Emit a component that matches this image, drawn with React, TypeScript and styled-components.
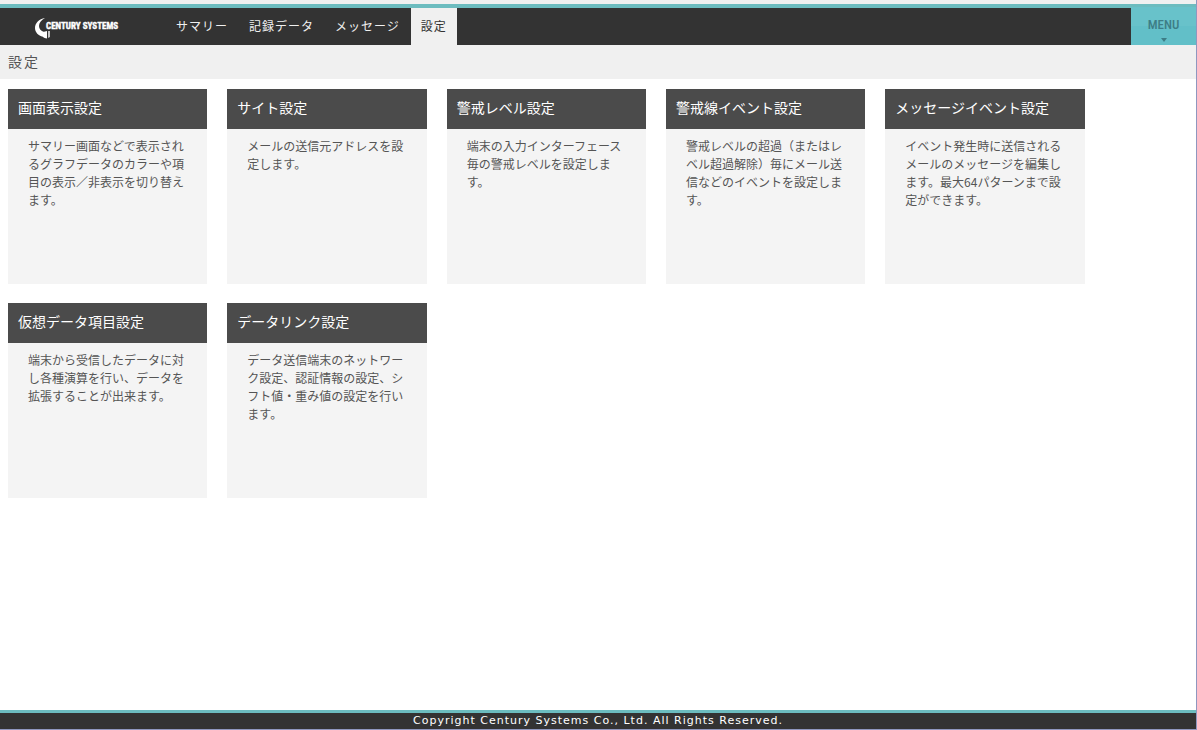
import React from "react";
import styled, { createGlobalStyle, css } from "styled-components";

const colors = {
  teal: "#6cbcbf",
  menu: "#62bfc8",
  dark: "#333333",
  panel: "#f0f0f0",
  cardHead: "#4b4b4b",
  cardBody: "#f4f4f4",
  text: "#555555",
  edge: "#8f97bf",
};

const GlobalStyle = createGlobalStyle`
  *, *::before, *::after { box-sizing: border-box; }
  body {
    margin: 0;
    background: #ffffff;
    color: ${colors.text};
    font-family: "Noto Sans CJK JP", sans-serif;
    font-size: 12px;
    line-height: 18px;
  }
`;

const Page = styled.div`
  display: flex;
  flex-direction: column;
  min-height: 100vh;
  border-right: 1px solid ${colors.edge};
  border-bottom: 1px solid ${colors.edge};
`;

const Header = styled.header`
  padding-top: 4px;
  background: ${colors.panel};
`;

const NavBar = styled.div`
  display: flex;
  align-items: stretch;
  height: 41px;
  border-top: 4px solid ${colors.teal};
  background: ${colors.dark};
`;

const LogoLink = styled.a`
  display: flex;
  align-items: center;
  width: 166px;
  padding-left: 33px;
`;

const Nav = styled.nav`
  display: flex;
  flex: 1;
  gap: 1px;
`;

const NavLink = styled.a<{ $active?: boolean }>`
  display: flex;
  align-items: center;
  padding: 0 10px 2px;
  color: #f0f0f0;
  letter-spacing: 1px;
  text-decoration: none;
  white-space: nowrap;
  ${(p) =>
    p.$active &&
    css`
      background: ${colors.panel};
      color: ${colors.dark};
    `}
`;

const MenuButton = styled.button`
  display: flex;
  flex-direction: column;
  align-items: center;
  justify-content: flex-end;
  gap: 5px;
  width: 65px;
  margin-top: -4px;
  padding: 0 0 3px;
  border: 0;
  border-top: 3px solid ${colors.teal};
  background: linear-gradient(#68c2ca 50%, ${colors.menu} 50%);
  color: #3d7d86;
  font: 500 13px/16px "Roboto Condensed", Roboto, sans-serif;
`;

const PageTitle = styled.h1`
  margin: 0;
  padding: 7px 8px 9px;
  background: ${colors.panel};
  font-size: 14px;
  font-weight: 400;
  line-height: 18px;
  letter-spacing: 2px;
`;

const Main = styled.main`
  flex: 1;
  padding: 10px 0 20px 8px;
`;

const CardGrid = styled.div`
  display: grid;
  grid-template-columns: repeat(auto-fill, calc((100% + 8px) / 6));
  grid-auto-rows: minmax(195px, auto);
  gap: 19px 20px;
`;

const Card = styled.a`
  display: block;
  background: ${colors.cardBody};
  color: inherit;
  text-decoration: none;
`;

const CardTitle = styled.h2`
  margin: 0;
  padding: 8px 10px 12px;
  background: ${colors.cardHead};
  color: #ffffff;
  font-size: 14px;
  font-weight: 400;
  line-height: 20px;
  white-space: nowrap;
`;

const CardText = styled.p`
  margin: 0;
  padding: 8px 20px;
`;

const Footer = styled.footer`
  border-top: 3px solid ${colors.teal};
  background: ${colors.dark};
  color: #ffffff;
  font: 11px/16px "DejaVu Sans", sans-serif;
  letter-spacing: 1px;
  text-align: center;
`;

const navItems = ["サマリー", "記録データ", "メッセージ", "設定"];

const cards = [
  {
    title: "画面表示設定",
    text: "サマリー画面などで表示されるグラフデータのカラーや項目の表示／非表示を切り替えます。",
  },
  { title: "サイト設定", text: "メールの送信元アドレスを設定します。" },
  {
    title: "警戒レベル設定",
    text: "端末の入力インターフェース毎の警戒レベルを設定します。",
  },
  {
    title: "警戒線イベント設定",
    text: "警戒レベルの超過（またはレベル超過解除）毎にメール送信などのイベントを設定します。",
  },
  {
    title: "メッセージイベント設定",
    text: "イベント発生時に送信されるメールのメッセージを編集します。最大64パターンまで設定ができます。",
  },
  {
    title: "仮想データ項目設定",
    text: "端末から受信したデータに対し各種演算を行い、データを拡張することが出来ます。",
  },
  {
    title: "データリンク設定",
    text: "データ送信端末のネットワーク設定、認証情報の設定、シフト値・重み値の設定を行います。",
  },
];

function Logo() {
  return (
    <svg width="88" height="24" viewBox="0 0 88 24" role="img" aria-label="Century Systems">
      <path
        d="M12 3C6 4 2 8 2 13c0 4 3 8 9 9v-5c-3-1-5-3-5-6 0-3 2-6 6-8z"
        fill="#ffffff"
      />
      <path d="M10 17l4-1v7.500c-2 0-3-1-4-1.500z" fill="#ffffff" />
      <path d="M15 16h2v6l-2 1z" fill="#c4c4c4" />
      <text
        x="13"
        y="14"
        fill="#ffffff"
        stroke="#ffffff"
        strokeWidth="0.4"
        fontFamily="'Liberation Sans Narrow', 'Roboto Condensed', 'DejaVu Sans Condensed', sans-serif"
        fontSize="9"
        fontWeight="700"
      >
        CENTURY SYSTEMS
      </text>
    </svg>
  );
}

export default function App() {
  return (
    <>
      <GlobalStyle />
      <Page lang="ja">
        <Header>
          <NavBar>
            <LogoLink href="#">
              <Logo />
            </LogoLink>
            <Nav>
              {navItems.map((item) => (
                <NavLink key={item} href="#" $active={item === "設定"}>
                  {item}
                </NavLink>
              ))}
            </Nav>
            <MenuButton type="button">
              MENU
              <svg width="6" height="4" viewBox="0 0 6 4" aria-hidden="true">
                <path d="M0 0h6L3 4z" fill="#3d7d86" />
              </svg>
            </MenuButton>
          </NavBar>
        </Header>
        <PageTitle>設定</PageTitle>
        <Main>
          <CardGrid>
            {cards.map((card) => (
              <Card key={card.title} href="#">
                <CardTitle>{card.title}</CardTitle>
                <CardText>{card.text}</CardText>
              </Card>
            ))}
          </CardGrid>
        </Main>
        <Footer>Copyright Century Systems Co., Ltd. All Rights Reserved.</Footer>
      </Page>
    </>
  );
}
